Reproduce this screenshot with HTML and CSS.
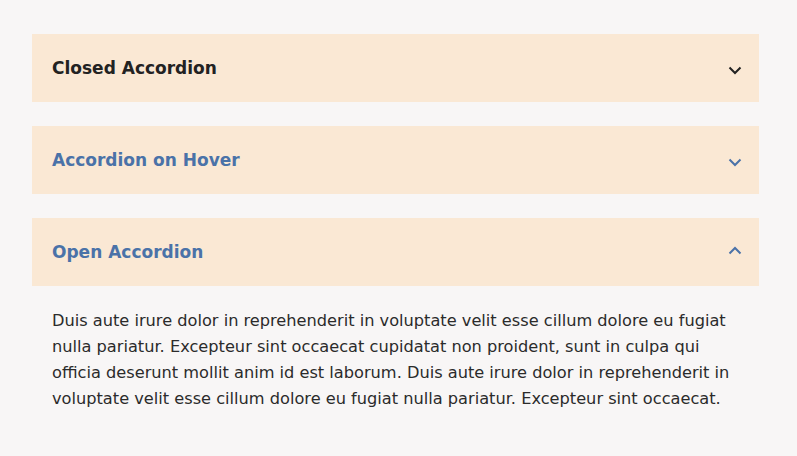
FILE: index.html
```html
<!DOCTYPE html>
<html lang="en">
<head>
<meta charset="utf-8">
<link rel="stylesheet" href="styles.css">
</head>
<body>
<div class="accordion">
  <div class="item">
    <div class="head">
      <span class="title">Closed Accordion</span>
      <svg class="chev" width="14" height="9" viewBox="0 0 14 9"><path d="M1.5 1.5 L7 7 L12.5 1.5" fill="none" stroke="currentColor" stroke-width="2"/></svg>
    </div>
  </div>
  <div class="item hover">
    <div class="head">
      <span class="title">Accordion on Hover</span>
      <svg class="chev" width="14" height="9" viewBox="0 0 14 9"><path d="M1.5 1.5 L7 7 L12.5 1.5" fill="none" stroke="currentColor" stroke-width="2"/></svg>
    </div>
  </div>
  <div class="item open">
    <div class="head">
      <span class="title">Open Accordion</span>
      <svg class="chev" width="14" height="9" viewBox="0 0 14 9"><path d="M1.5 7.5 L7 2 L12.5 7.5" fill="none" stroke="currentColor" stroke-width="2"/></svg>
    </div>
    <div class="body">
      <p>Duis aute irure dolor in reprehenderit in voluptate velit esse cillum dolore eu fugiat nulla pariatur. Excepteur sint occaecat cupidatat non proident, sunt in culpa qui officia deserunt mollit anim id est laborum. Duis aute irure dolor in reprehenderit in voluptate velit esse cillum dolore eu fugiat nulla pariatur. Excepteur sint occaecat.</p>
    </div>
  </div>
</div>
</body>
</html>
```
FILE: styles.css
```css
html, body {
  margin: 0;
  padding: 0;
  background: #f8f6f6;
}
body {
  font-family: "DejaVu Sans", sans-serif;
  color: #222;
}
.accordion {
  padding: 34px 38px 0 32px;
  display: flex;
  flex-direction: column;
  gap: 24px;
}
.head {
  height: 68px;
  background: #fae8d4;
  display: flex;
  align-items: center;
  justify-content: space-between;
  padding: 0 17px 0 20px;
}
.title {
  font-size: 17px;
  font-weight: 700;
  color: #222;
}
.chev {
  color: #222;
  margin-top: 4px;
}
.hover .title, .hover .chev, .open .title, .open .chev {
  color: #4a72a8;
}
.open .chev {
  margin-top: -4px;
}
.body {
  padding: 22px 20px 0 20px;
}
.body p {
  margin: 0;
  font-size: 16.2px;
  line-height: 26px;
  color: #2b2b2b;
}
```
